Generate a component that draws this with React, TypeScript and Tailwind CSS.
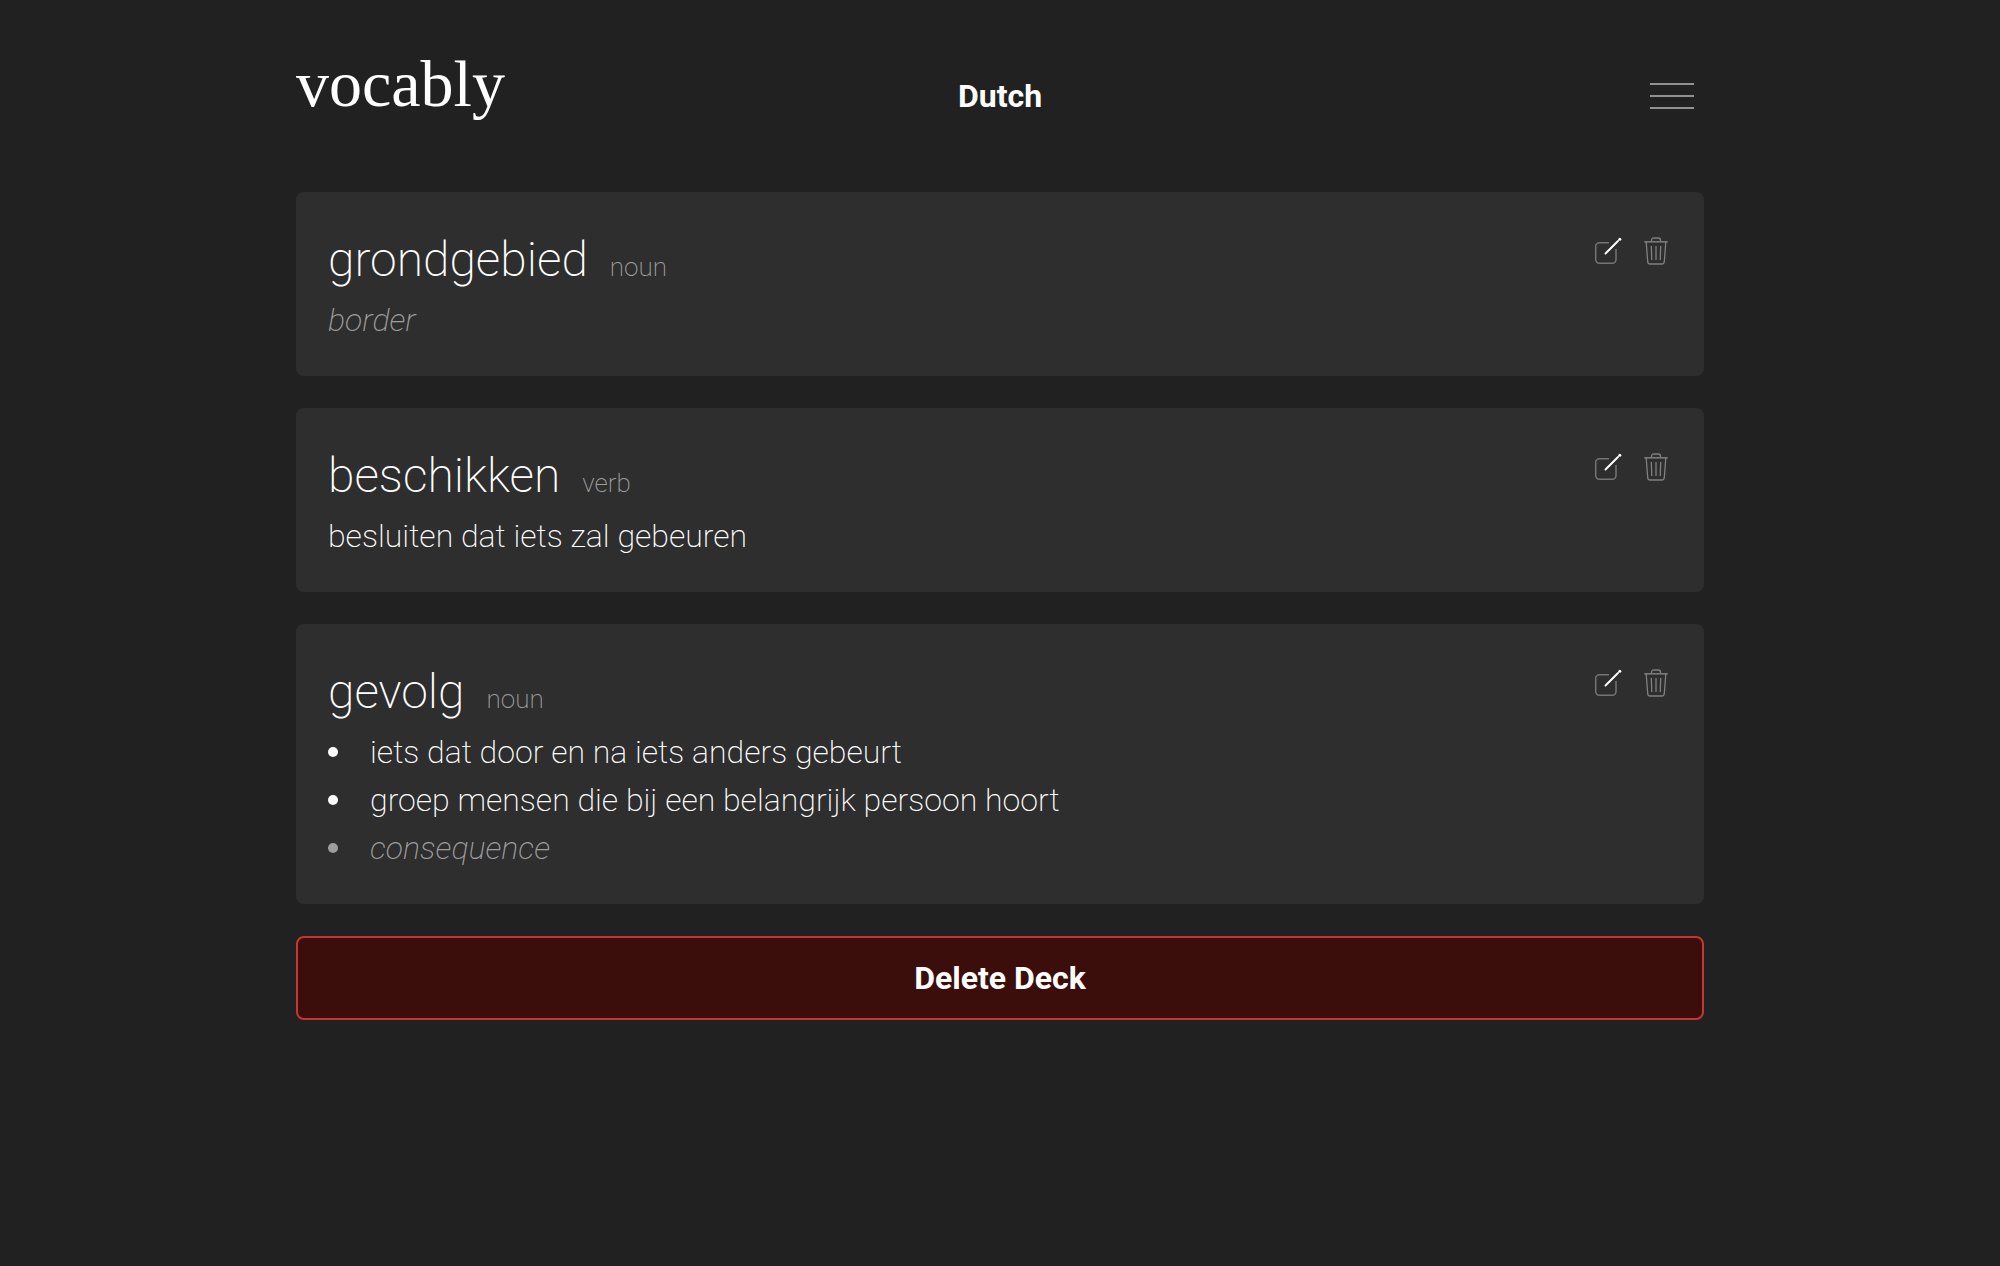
type Meaning = { text: string; translation?: boolean };
type Entry = { word: string; part: string; meanings: Meaning[] };

const entries: Entry[] = [
  { word: "grondgebied", part: "noun", meanings: [{ text: "border", translation: true }] },
  { word: "beschikken", part: "verb", meanings: [{ text: "besluiten dat iets zal gebeuren" }] },
  {
    word: "gevolg",
    part: "noun",
    meanings: [
      { text: "iets dat door en na iets anders gebeurt" },
      { text: "groep mensen die bij een belangrijk persoon hoort" },
      { text: "consequence", translation: true },
    ],
  },
];

function EditIcon() {
  return (
    <svg className="size-8" viewBox="0 0 32 32" fill="none" aria-hidden="true">
      <path
        d="M17 6.7H7.5A3.8 3.8 0 0 0 3.7 10.5V23.5A3.8 3.8 0 0 0 7.5 27.3H20.2A3.8 3.8 0 0 0 24 23.5V13"
        stroke="#747474"
        strokeWidth="1.5"
      />
      <path d="M13.5 17.5L26 5" stroke="#fff" strokeWidth="2" strokeLinecap="round" />
      <circle cx="27.8" cy="3.2" r="1.5" fill="#fff" />
    </svg>
  );
}

function TrashIcon() {
  return (
    <svg className="size-8" viewBox="0 0 32 32" fill="none" stroke="#808080" aria-hidden="true">
      <path d="M4.3 5.8H27.7" strokeWidth="1.5" />
      <path
        d="M11.5 5.5V4.2A2.2 2.2 0 0 1 13.7 2H18.3A2.2 2.2 0 0 1 20.5 4.2V5.5M6.2 6L7.7 25.5A2.5 2.5 0 0 0 10.2 28H21.8A2.5 2.5 0 0 0 24.3 25.5L25.8 6M11.3 10L11.8 24M16 10V24M20.7 10L20.2 24"
        strokeWidth="1.3"
      />
    </svg>
  );
}

function Card({ entry }: { entry: Entry }) {
  return (
    <article className="flex items-start justify-between gap-8 rounded-lg bg-[#2e2e2e] p-8">
      <div className="min-w-0">
        <div className="flex items-baseline gap-[22px]">
          <h2 className="text-[48px] leading-[72px] font-extralight">{entry.word}</h2>
          <span className="text-[26px] font-extralight text-[#9e9e9e]">{entry.part}</span>
        </div>
        {entry.meanings.length === 1 ? (
          entry.meanings.map((m) => (
            <p key={m.text} className={m.translation ? "text-[#9e9e9e] italic" : ""}>
              {m.text}
            </p>
          ))
        ) : (
          <ul>
            {entry.meanings.map((m) => (
              <li
                key={m.text}
                className={m.translation ? "flex items-center gap-8 text-[#9e9e9e] italic" : "flex items-center gap-8"}
              >
                <span className="size-2.5 shrink-0 rounded-full bg-current" />
                <span>{m.text}</span>
              </li>
            ))}
          </ul>
        )}
      </div>
      <div className="flex shrink-0 gap-4 pt-3">
        <button type="button" aria-label={`Edit ${entry.word}`} className="cursor-pointer">
          <EditIcon />
        </button>
        <button type="button" aria-label={`Delete ${entry.word}`} className="cursor-pointer">
          <TrashIcon />
        </button>
      </div>
    </article>
  );
}

export default function App() {
  return (
    <div className="min-h-screen bg-[#212121] font-[Roboto,sans-serif] text-[32px] leading-[48px] font-extralight text-white">
      <div className="mx-auto max-w-[1472px] px-8">
        <header className="grid h-48 grid-cols-3 items-center">
          <a
            href="#"
            className="justify-self-start pb-6 font-['Liberation_Serif',serif] text-[66px] leading-[72px] font-normal"
          >
            vocably
          </a>
          <h1 className="text-center font-bold">Dutch</h1>
          <button type="button" aria-label="Menu" className="mr-2.5 flex cursor-pointer flex-col gap-2.5 justify-self-end">
            <span className="h-0.5 w-11 bg-[#919191]" />
            <span className="h-0.5 w-11 bg-[#919191]" />
            <span className="h-0.5 w-11 bg-[#919191]" />
          </button>
        </header>
        <main className="flex flex-col gap-8 pb-8">
          {entries.map((entry) => (
            <Card key={entry.word} entry={entry} />
          ))}
          <button
            type="button"
            className="cursor-pointer rounded-lg border-2 border-[#c73530] bg-[#3b0d0b] py-4 font-bold"
          >
            Delete Deck
          </button>
        </main>
      </div>
    </div>
  );
}
